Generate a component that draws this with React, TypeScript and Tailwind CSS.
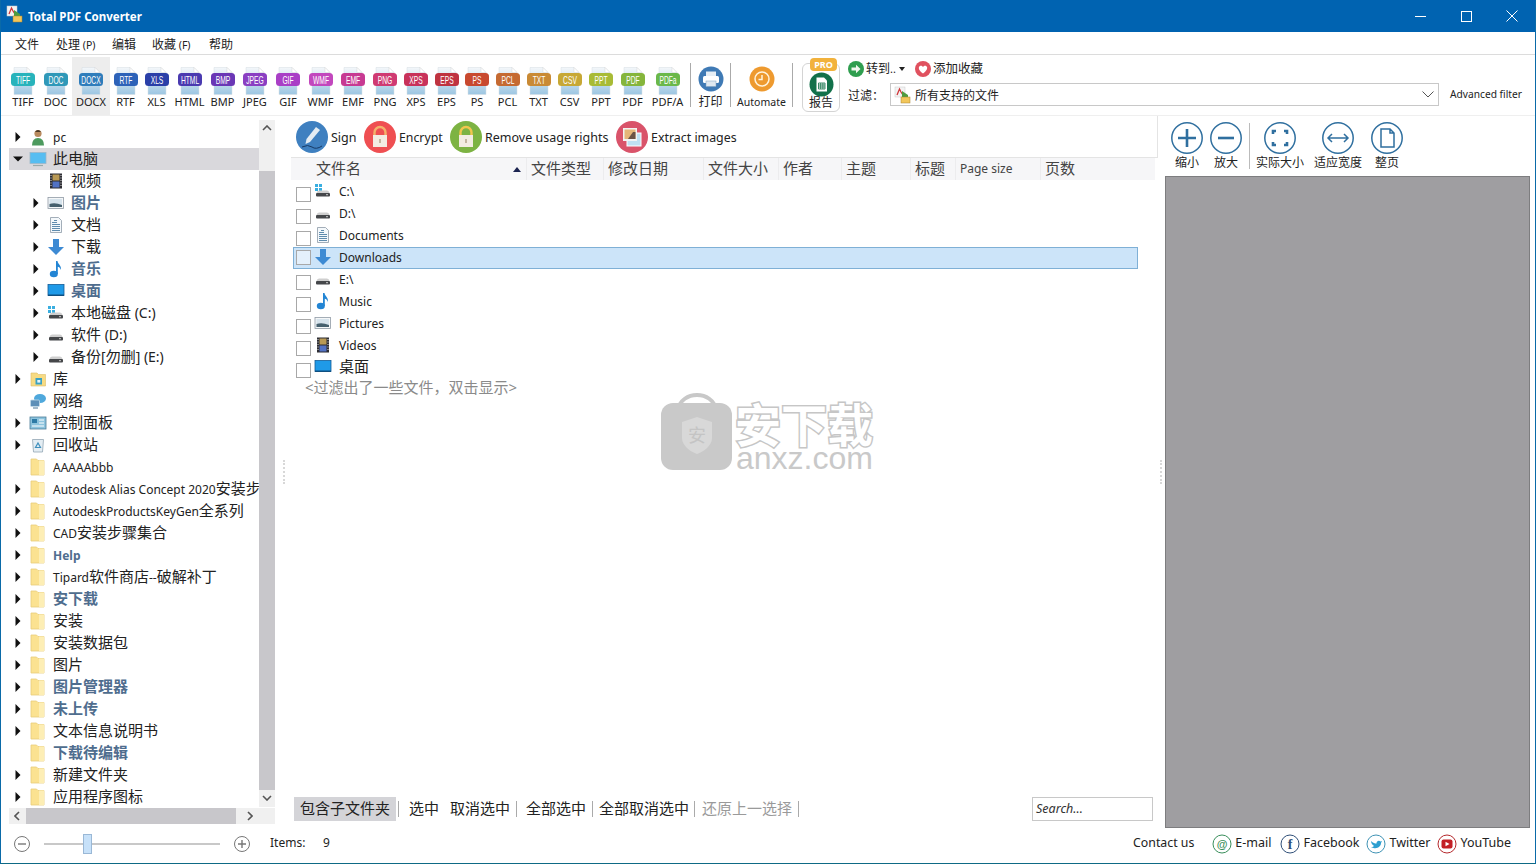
import React from "react";

const SANS = "font-['Noto_Sans','Noto_Sans_CJK_SC',sans-serif]";

function Mixed({ text, cjk = "text-[15px]", latin = "text-[12px]" }: { text: string; cjk?: string; latin?: string }) {
  const parts = text.split(/([\u3000-\u9fff\uff00-\uffef]+)/).filter(Boolean);
  return (
    <>
      {parts.map((p, i) => (
        <span key={i} className={/[\u3000-\u9fff\uff00-\uffef]/.test(p) ? cjk : latin}>
          {p}
        </span>
      ))}
    </>
  );
}

const FORMATS: { n: string; c: string; w: string; active?: boolean }[] = [
  { n: "TIFF", c: "#27b3bb", w: "w-[32px]" },
  { n: "DOC", c: "#2f98b8", w: "w-[33px]" },
  { n: "DOCX", c: "#2f7dbb", w: "w-[38px]", active: true },
  { n: "RTF", c: "#2d62b8", w: "w-[31px]" },
  { n: "XLS", c: "#2a3fa8", w: "w-[31px]" },
  { n: "HTML", c: "#4a3ab0", w: "w-[35px]" },
  { n: "BMP", c: "#6a37b5", w: "w-[31px]" },
  { n: "JPEG", c: "#8a3fc2", w: "w-[34px]" },
  { n: "GIF", c: "#a93fc6", w: "w-[32px]" },
  { n: "WMF", c: "#c247bd", w: "w-[33px]" },
  { n: "EMF", c: "#c73a92", w: "w-[32px]" },
  { n: "PNG", c: "#cf3a72", w: "w-[32px]" },
  { n: "XPS", c: "#c8325a", w: "w-[30px]" },
  { n: "EPS", c: "#bf3340", w: "w-[31px]" },
  { n: "PS", c: "#c8492f", w: "w-[30px]" },
  { n: "PCL", c: "#c56a32", w: "w-[31px]" },
  { n: "TXT", c: "#c98a35", w: "w-[31px]" },
  { n: "CSV", c: "#c7a835", w: "w-[31px]" },
  { n: "PPT", c: "#a8bb35", w: "w-[32px]" },
  { n: "PDF", c: "#85b53c", w: "w-[31px]" },
  { n: "PDF/A", c: "#6ab84a", w: "w-[39px]" },
];

function FileIcon({ n, c }: { n: string; c: string }) {
  const id = "pg" + n.replace("/", "");
  return (
    <svg width="26" height="28" viewBox="0 0 26 28">
      <defs>
        <linearGradient id={id} x1="0" y1="0" x2="0" y2="1">
          <stop offset="0" stopColor="#f4f7fa" />
          <stop offset="1" stopColor="#9cc6e2" />
        </linearGradient>
      </defs>
      <path d="M4 0.5H17L22 5.5V27.5H4Z" fill={`url(#${id})`} stroke="#d5dde3" strokeWidth="0.5" />
      <path d="M17 0.5V5.5H22Z" fill="#fff" stroke="#ccc" strokeWidth="0.4" />
      <rect x="1" y="6" width="24" height="13" rx="3.5" fill={c} />
      <text transform="translate(13 16.6) scale(0.78 1.25)" textAnchor="middle" fontSize="8.6" fill="#fff" fontFamily="Liberation Sans">
        {n === "PDF/A" ? "PDFa" : n}
      </text>
    </svg>
  );
}

function Arrow({ open }: { open?: boolean }) {
  return open ? (
    <svg width="10" height="10" viewBox="0 0 10 10"><path d="M0 2.5H10L5 7.5Z" fill="#111" /></svg>
  ) : (
    <svg width="10" height="10" viewBox="0 0 10 10"><path d="M2.5 0V10L7.5 5Z" fill="#111" /></svg>
  );
}

function Folder() {
  return (
    <svg width="16" height="18" viewBox="0 0 16 18">
      <path d="M1 1H6.5L8 2.5H14V17H1Z" fill="#fbe291" stroke="#e9cd7c" strokeWidth="0.8" />
      <path d="M9 2.5H14V17H9Z" fill="#fdeeb5" />
    </svg>
  );
}

function Drive({ win }: { win?: boolean }) {
  return (
    <svg width="18" height="16" viewBox="0 0 18 16">
      {win && <path d="M1 1h3v3H1zM5 1h3v3H5zM1 5h3v3H1zM5 5h3v3H5z" fill="#39aee0" />}
      <path d="M2.5 10Q3 7.5 5 7.5H13Q15 7.5 15.5 10Z" fill="#cfcfcf" />
      <rect x="2" y="10" width="14" height="3.5" rx="1" fill="#45474a" />
      <rect x="12" y="11.2" width="2" height="1" fill="#ccc" />
    </svg>
  );
}

function Monitor({ small }: { small?: boolean }) {
  return (
    <svg width="18" height="16" viewBox="0 0 18 16">
      <rect x="1" y="1.5" width="16" height="11" fill={small ? "#1f9ae8" : "#56bdf1"} stroke={small ? "#155c96" : "#9cb7c9"} strokeWidth="0.8" />
      {!small && <path d="M4 14.5H14" stroke="#9aa" strokeWidth="1.2" />}
      {small && <rect x="1" y="11.5" width="16" height="1.5" fill="#0f4f80" />}
    </svg>
  );
}

function Film() {
  return (
    <svg width="16" height="16" viewBox="0 0 16 16">
      <rect x="2" y="0.5" width="12" height="15" fill="#2d2d33" />
      <rect x="4.5" y="1.5" width="7" height="6" fill="#b99a55" />
      <rect x="4.5" y="8.5" width="7" height="6" fill="#5272c4" />
      <path d="M3 2v12M13 2v12" stroke="#ddd" strokeWidth="1" strokeDasharray="1 1.5" />
    </svg>
  );
}

function Pic() {
  return (
    <svg width="18" height="14" viewBox="0 0 18 14">
      <rect x="1" y="1.5" width="15.5" height="11" fill="#f5f7f8" stroke="#8f9aa5" strokeWidth="0.8" />
      <rect x="2.5" y="3" width="12.5" height="8" fill="#d6e3ec" />
      <path d="M2.5 8Q8 6 15 9V11H2.5Z" fill="#46606e" />
    </svg>
  );
}

function Doc() {
  return (
    <svg width="14" height="16" viewBox="0 0 14 16">
      <path d="M1.5.5H9.5L12.5 3.5V15.5H1.5Z" fill="#f4f8fb" stroke="#8d9aa7" strokeWidth="0.8" />
      <path d="M5 3.5H8M3 5.5H8M3 7.5H11M3 9.5H11M3 11.5H11M3 13.5H11" stroke="#4e7fa5" strokeWidth="0.9" />
    </svg>
  );
}

function Down() {
  return (
    <svg width="18" height="18" viewBox="0 0 18 18">
      <path d="M6 1H12V9H17L9 17L1 9H6Z" fill="#3d8ad3" />
    </svg>
  );
}

function Note() {
  return (
    <svg width="14" height="18" viewBox="0 0 14 18">
      <ellipse cx="4.8" cy="14" rx="4" ry="3.2" fill="#2385d4" />
      <path d="M7 14V1H8.5C9 4.5 12.5 5 12 10C11 7.5 10 7 8.8 6.8V14Z" fill="#2385d4" />
    </svg>
  );
}

function Person() {
  return (
    <svg width="14" height="17" viewBox="0 0 14 17">
      <circle cx="7" cy="4.5" r="3.6" fill="#b98a5e" />
      <path d="M4 3Q7 -1 10 3Z" fill="#4a3a2a" />
      <path d="M1 16.5Q1 9 7 9Q13 9 13 16.5Z" fill="#4d9a5e" />
    </svg>
  );
}

function Library() {
  return (
    <svg width="17" height="16" viewBox="0 0 17 16">
      <path d="M1 2H7L8.5 3.5H15.5V15H1Z" fill="#f7db83" stroke="#dcbd6a" strokeWidth="0.6" />
      <rect x="5.5" y="7" width="6.5" height="6.5" fill="#3aa1c4" />
      <rect x="7.3" y="9" width="3" height="2.6" fill="#e7f5fa" />
    </svg>
  );
}

function Net() {
  return (
    <svg width="18" height="16" viewBox="0 0 18 16">
      <ellipse cx="11" cy="5.5" rx="6" ry="4.5" fill="#4fa8dc" />
      <rect x="1.5" y="7" width="9" height="6.5" rx="1" fill="#5d8fb8" stroke="#c2d9e8" strokeWidth="0.8" />
      <path d="M4 15H9" stroke="#6a8ea8" strokeWidth="1.2" />
    </svg>
  );
}

function Control() {
  return (
    <svg width="18" height="14" viewBox="0 0 18 14">
      <rect x="1" y="1" width="16" height="12" fill="#8dc4de" stroke="#4c7d98" strokeWidth="0.8" />
      <rect x="3" y="3" width="5" height="4" fill="#2d7aa5" />
      <path d="M10 4H15M10 7H15M3 10H15" stroke="#fff" strokeWidth="1" />
    </svg>
  );
}

function Bin() {
  return (
    <svg width="16" height="16" viewBox="0 0 16 16">
      <path d="M2.5 2.5H13.5L12.5 15H3.5Z" fill="#e4edf3" stroke="#93a6b4" strokeWidth="0.8" />
      <path d="M8 6L10.5 10.5H5.5Z" fill="none" stroke="#3e8fbd" strokeWidth="1.2" />
    </svg>
  );
}

type TreeRow = { t: string; lvl?: 0 | 1; arrow?: boolean | "open"; b?: boolean; i: React.ReactNode; sel?: boolean };

const TREE: TreeRow[] = [
  { t: "pc", arrow: true, i: <Person /> },
  { t: "此电脑", arrow: "open", i: <Monitor />, sel: true },
  { t: "视频", lvl: 1, i: <Film /> },
  { t: "图片", lvl: 1, arrow: true, b: true, i: <Pic /> },
  { t: "文档", lvl: 1, arrow: true, i: <Doc /> },
  { t: "下载", lvl: 1, arrow: true, i: <Down /> },
  { t: "音乐", lvl: 1, arrow: true, b: true, i: <Note /> },
  { t: "桌面", lvl: 1, arrow: true, b: true, i: <Monitor small /> },
  { t: "本地磁盘 (C:)", lvl: 1, arrow: true, i: <Drive win /> },
  { t: "软件 (D:)", lvl: 1, arrow: true, i: <Drive /> },
  { t: "备份[勿删] (E:)", lvl: 1, arrow: true, i: <Drive /> },
  { t: "库", arrow: true, i: <Library /> },
  { t: "网络", i: <Net /> },
  { t: "控制面板", arrow: true, i: <Control /> },
  { t: "回收站", arrow: true, i: <Bin /> },
  { t: "AAAAAbbb", i: <Folder /> },
  { t: "Autodesk Alias Concept 2020安装步骤", arrow: true, i: <Folder /> },
  { t: "AutodeskProductsKeyGen全系列", arrow: true, i: <Folder /> },
  { t: "CAD安装步骤集合", arrow: true, i: <Folder /> },
  { t: "Help", arrow: true, b: true, i: <Folder /> },
  { t: "Tipard软件商店--破解补丁", arrow: true, i: <Folder /> },
  { t: "安下载", arrow: true, b: true, i: <Folder /> },
  { t: "安装", arrow: true, i: <Folder /> },
  { t: "安装数据包", arrow: true, i: <Folder /> },
  { t: "图片", arrow: true, i: <Folder /> },
  { t: "图片管理器", arrow: true, b: true, i: <Folder /> },
  { t: "未上传", arrow: true, b: true, i: <Folder /> },
  { t: "文本信息说明书", arrow: true, i: <Folder /> },
  { t: "下载待编辑", b: true, i: <Folder /> },
  { t: "新建文件夹", arrow: true, i: <Folder /> },
  { t: "应用程序图标", arrow: true, i: <Folder /> },
];

const FILES: { t: string; i: React.ReactNode; sel?: boolean }[] = [
  { t: "C:\\", i: <Drive win /> },
  { t: "D:\\", i: <Drive /> },
  { t: "Documents", i: <Doc /> },
  { t: "Downloads", i: <Down />, sel: true },
  { t: "E:\\", i: <Drive /> },
  { t: "Music", i: <Note /> },
  { t: "Pictures", i: <Pic /> },
  { t: "Videos", i: <Film /> },
  { t: "桌面", i: <Monitor small /> },
];

const COLS: { t: string; w: string; small?: boolean }[] = [
  { t: "文件类型", w: "w-[77px]" },
  { t: "修改日期", w: "w-[100px]" },
  { t: "文件大小", w: "w-[75px]" },
  { t: "作者", w: "w-[63px]" },
  { t: "主题", w: "w-[69px]" },
  { t: "标题", w: "w-[45px]" },
  { t: "Page size", w: "w-[85px]", small: true },
  { t: "页数", w: "w-[60px]" },
];

function Lock({ bg, shackle }: { bg: string; shackle: string }) {
  return (
    <svg width="32" height="32" viewBox="0 0 32 32">
      <circle cx="16" cy="16" r="16" fill={bg} />
      <path d="M10.5 15V11.5a5.5 5.5 0 0 1 11 0V15" fill="none" stroke={shackle} strokeWidth="2.4" />
      <rect x="9" y="14" width="14" height="12" fill="#f3ece2" />
      <rect x="15.2" y="18" width="1.6" height="4" fill="#b8a890" />
    </svg>
  );
}

function ViewBtn({ label, children, w }: { label: string; children: React.ReactNode; w: string }) {
  return (
    <div className={`flex flex-col items-center ${w}`}>
      <svg width="32" height="32" viewBox="0 0 32 32" fill="none" stroke="#2f6f9f">
        <circle cx="16" cy="16" r="15.2" strokeWidth="1.5" />
        {children}
      </svg>
      <span className="mt-px text-[12px] leading-[16px] text-[#222] whitespace-nowrap">{label}</span>
    </div>
  );
}

function Sep() {
  return <div className="w-px h-[16px] bg-[#aaa]" />;
}

function Social({ c, label, children, className }: { c: string; label: string; children: React.ReactNode; className: string }) {
  return (
    <div className={`flex items-center gap-[3px] ${className}`}>
      <svg width="20" height="20" viewBox="0 0 20 20">
        <circle cx="10" cy="10" r="9" fill="none" stroke={c} strokeWidth="1" />
        {children}
      </svg>
      <span className="text-[12.5px] text-[#222]">{label}</span>
    </div>
  );
}

function AppIcon() {
  return (
    <svg width="18" height="18" viewBox="0 0 18 18">
      <rect x="1" y="1" width="10" height="10" fill="#f3f3f3" stroke="#c9c9c9" strokeWidth="0.5" />
      <path d="M3 9L5.5 3L7 6L9 9" fill="none" stroke="#d0363a" strokeWidth="1.3" />
      <path d="M8 5L14 9V12H8Z" fill="#4f9b3f" />
      <rect x="7" y="11" width="9" height="6" fill="#f2c65a" stroke="#a88232" strokeWidth="0.5" />
    </svg>
  );
}

export default function App() {
  return (
    <div className={`relative w-[1536px] h-[864px] flex flex-col bg-white overflow-hidden border-x border-b border-x-[#0a6aa8] border-b-[#0e6a85] ${SANS} text-[#222]`}>
      {/* Title bar */}
      <div className="h-[32px] -mx-px flex items-center bg-[#0063b1] text-white shrink-0">
        <div className="ml-[6px] mb-[4px]"><AppIcon /></div>
        <span className="ml-[4px] mt-[2px] text-[11.5px] font-bold">Total PDF Converter</span>
        <div className="ml-auto flex items-center">
          <div className="w-[46px] flex justify-center"><svg width="11" height="11" viewBox="0 0 11 11"><path d="M0 5.5H11" stroke="#fff" /></svg></div>
          <div className="w-[46px] flex justify-center"><svg width="11" height="11" viewBox="0 0 11 11"><rect x="0.5" y="0.5" width="10" height="10" fill="none" stroke="#fff" /></svg></div>
          <div className="w-[46px] mr-[1px] flex justify-center"><svg width="12" height="12" viewBox="0 0 12 12"><path d="M0.5 0.5L11.5 11.5M11.5 0.5L0.5 11.5" stroke="#fff" /></svg></div>
        </div>
      </div>

      {/* Menu */}
      <div className="h-[23px] flex items-center pl-[14px] border-b border-[#dcdcdc] shrink-0 text-[#222]">
        <span className="w-[41px]"><Mixed text="文件" cjk="text-[12px]" /></span>
        <span className="w-[56px]"><Mixed text="处理" cjk="text-[12px]" /><Mixed text=" (P)" latin="text-[10.5px]" /></span>
        <span className="w-[40px]"><Mixed text="编辑" cjk="text-[12px]" /></span>
        <span className="w-[57px]"><Mixed text="收藏" cjk="text-[12px]" /><Mixed text=" (F)" latin="text-[10.5px]" /></span>
        <span><Mixed text="帮助" cjk="text-[12px]" /></span>
      </div>

      {/* Toolbar */}
      <div className="h-[61px] flex items-stretch pl-[6px] border-b border-[#efefef] shrink-0">
        <div className="flex items-stretch pt-[2px]">
          {FORMATS.map((f) => (
            <div key={f.n} className={`${f.w} flex flex-col items-center pt-[10px] ${f.active ? "bg-[#ededed]" : ""}`}>
              <FileIcon n={f.n} c={f.c} />
              <span className="text-[11px] leading-[14px] text-[#222]">{f.n}</span>
            </div>
          ))}
        </div>
        <div className="w-px my-[8px] ml-[3px] bg-[#aaa]" />
        <div className="w-[39px] flex flex-col items-center pt-[11px]">
          <svg width="26" height="26" viewBox="0 0 26 26">
            <circle cx="13" cy="13" r="12.5" fill="#3f7ab5" />
            <rect x="8" y="5.5" width="10" height="5" fill="#e6eef5" />
            <rect x="5" y="10" width="16" height="7" rx="1.5" fill="#fff" />
            <rect x="8" y="15" width="10" height="5.5" fill="#dfe8f0" stroke="#7da0c0" strokeWidth="0.5" />
          </svg>
          <span className="text-[12px] leading-[16px] mt-[2px]">打印</span>
        </div>
        <div className="w-px my-[8px] bg-[#aaa]" />
        <div className="w-[61px] flex flex-col items-center pt-[11px]">
          <svg width="26" height="26" viewBox="0 0 26 26">
            <circle cx="13" cy="13" r="12.5" fill="#ee9a2f" />
            <circle cx="13" cy="13" r="7" fill="none" stroke="#fff3dc" strokeWidth="1.5" />
            <path d="M13 9V13.5H9.5" fill="none" stroke="#fff3dc" strokeWidth="1.5" />
          </svg>
          <span className="text-[10.5px] leading-[16px] mt-[2px]">Automate</span>
        </div>
        <div className="w-px my-[8px] bg-[#aaa]" />
        <div className="relative ml-[9px] mt-[8px] mb-[3px] w-[38px] rounded-[6px] border border-[#d4d4d4] flex flex-col items-center pt-[8px]">
          <span className="absolute -top-[6px] left-[7px] w-[27px] h-[13px] rounded-[4px] bg-[#f2b23c] text-white text-[9px] font-bold leading-[13px] text-center">PRO</span>
          <svg width="25" height="25" viewBox="0 0 25 25">
            <circle cx="12.5" cy="12.5" r="12" fill="#12714a" />
            <path d="M7.5 5.5H15L18 8.5V19.5H7.5Z" fill="#fff" />
            <path d="M9.5 11H16V17H9.5ZM9.5 13H16M9.5 15H16M11.7 11V17M13.9 11V17" fill="none" stroke="#12714a" strokeWidth="0.8" />
          </svg>
          <span className="text-[12px] leading-[15px] -mt-[2px]">报告</span>
        </div>
        <div className="ml-[8px] flex flex-col flex-1 pr-[13px]">
          <div className="h-[26px] flex items-center pt-[2px]">
            <svg width="16" height="16" viewBox="0 0 16 16"><circle cx="8" cy="8" r="8" fill="#2f9e4f" /><path d="M3.5 6.5H8V3.8L12.5 8L8 12.2V9.5H3.5Z" fill="#f2f7ef" /></svg>
            <span className="ml-[2px] text-[12px]">转到</span>
            <span className="text-[11px]">..</span>
            <svg className="ml-[3px]" width="6" height="4" viewBox="0 0 6 4"><path d="M0 0H6L3 4Z" fill="#222" /></svg>
            <svg className="ml-[10px]" width="16" height="16" viewBox="0 0 16 16"><circle cx="8" cy="8" r="8" fill="#e0515f" /><path d="M8 12.5C4 9.5 3.5 7.5 4 6C5 4 7 4.5 8 6C9 4.5 11 4 12 6C12.5 7.5 12 9.5 8 12.5Z" fill="#fff" /></svg>
            <span className="ml-[2px] text-[12.5px]">添加收藏</span>
          </div>
          <div className="h-[23px] mt-[2px] flex items-center">
            <span className="w-[42px] text-[12px] translate-y-px">过滤：</span>
            <div className="flex-1 h-[23px] border border-[#c8c8c8] flex items-center pl-[3px] pr-[4px]">
              <AppIcon />
              <span className="ml-[3px] text-[12px] translate-y-px">所有支持的文件</span>
              <svg className="ml-auto" width="12" height="7" viewBox="0 0 12 7"><path d="M0.5 0.5L6 6L11.5 0.5" fill="none" stroke="#555" /></svg>
            </div>
            <span className="ml-[11px] text-[10.2px] whitespace-nowrap">Advanced filter</span>
          </div>
        </div>
      </div>

      {/* Main */}
      <div className="flex-1 flex items-stretch min-h-0">
        {/* Left */}
        <div className="w-[282px] shrink-0 pl-[8px] pr-[8px] pt-[4px] pb-[4px] flex flex-col">
          <div className="flex-1 flex min-h-0">
            <div className="w-[250px] pt-[6px] overflow-hidden">
              {TREE.map((r, i) => (
                <div key={i} className={`h-[22px] flex items-center whitespace-nowrap ${r.lvl ? "pl-[18px]" : ""} ${r.sel ? "bg-[#d9d8dc]" : ""} ${r.b ? "font-bold text-[#4f6d8e]" : "text-[#222]"}`}>
                  <span className="w-[18px] flex justify-center shrink-0">
                    {r.arrow && <Arrow open={r.arrow === "open"} />}
                  </span>
                  <span className="w-[20px] ml-px flex justify-center shrink-0">{r.i}</span>
                  <span className="ml-[5px] -translate-y-px">
                    <Mixed text={r.t} latin={r.t.includes(":)") ? "text-[14px]" : "text-[12px]"} />
                  </span>
                </div>
              ))}
            </div>
            <div className="w-[16px] bg-[#f0f0f0] flex flex-col items-center">
              <svg className="mt-[5px]" width="10" height="6" viewBox="0 0 10 6"><path d="M1 5L5 1L9 5" fill="none" stroke="#555" strokeWidth="1.6" /></svg>
              <div className="mt-[40px] w-full h-[619px] bg-[#c8c7cb]" />
              <svg className="mt-[5px]" width="10" height="6" viewBox="0 0 10 6"><path d="M1 1L5 5L9 1" fill="none" stroke="#555" strokeWidth="1.6" /></svg>
            </div>
          </div>
          <div className="h-[16px] mt-px bg-[#f0f0f0] flex items-center shrink-0">
            <svg className="ml-[5px]" width="6" height="10" viewBox="0 0 6 10"><path d="M5 1L1 5L5 9" fill="none" stroke="#555" strokeWidth="1.6" /></svg>
            <div className="ml-[6px] w-[210px] h-full bg-[#c8c7cb]" />
            <svg className="ml-[11px]" width="6" height="10" viewBox="0 0 6 10"><path d="M1 1L5 5L1 9" fill="none" stroke="#555" strokeWidth="1.6" /></svg>
          </div>
        </div>

        <div className="w-[8px] shrink-0 flex items-center"><div className="h-[24px] border-l-2 border-dotted border-[#d8d8d8]" /></div>

        {/* Center */}
        <div className="w-[867px] shrink-0 flex flex-col">
          <div className="h-[42px] pt-[1px] flex items-center pl-[5px] pr-[3px] border-b border-r border-[#e4e4e4] shrink-0">
            <svg width="32" height="32" viewBox="0 0 32 32">
              <circle cx="16" cy="16" r="16" fill="#3f80c0" />
              <path d="M20 6L24 9L14 21L9.5 23L10.5 18Z" fill="#e4ecf3" />
              <path d="M6 26Q12 23 16 26T26 25" fill="none" stroke="#173a66" strokeWidth="1" />
            </svg>
            <span className="ml-[3px] mt-[3px] w-[33px] text-[12.5px]">Sign</span>
            <Lock bg="#ef4f52" shackle="#f4b26b" />
            <span className="ml-[3px] mt-[3px] w-[51px] text-[12.3px]">Encrypt</span>
            <Lock bg="#7db343" shackle="#f2c64e" />
            <span className="ml-[3px] mt-[3px] w-[131px] text-[12.5px] whitespace-nowrap">Remove usage rights</span>
            <svg width="32" height="32" viewBox="0 0 32 32">
              <circle cx="16" cy="16" r="16" fill="#d9536a" />
              <rect x="11" y="12" width="14" height="13" fill="#bfe0f2" stroke="#fff" strokeWidth="1" />
              <rect x="7" y="7" width="14" height="13" fill="#f3f3f3" />
              <rect x="8.5" y="8.5" width="11" height="9.5" fill="#e5b678" />
              <path d="M12 18L17 11H19.5V18Z" fill="#6a5346" />
            </svg>
            <span className="ml-[3px] mt-[3px] text-[12.4px] whitespace-nowrap">Extract images</span>
          </div>

          <div className="h-[22px] w-[864px] flex items-center bg-[#f6f6f8] shrink-0 text-[#444]">
            <span className="w-[235px] pl-[25px] flex items-center -translate-y-px">
              <span className="text-[15px]">文件名</span>
              <svg className="ml-auto mr-[5px] translate-y-px" width="8" height="5" viewBox="0 0 8 5"><path d="M0 5H8L4 0Z" fill="#1b2350" /></svg>
            </span>
            {COLS.map((c) => (
              <span key={c.t} className={`${c.w} h-full flex items-center pl-[4px] border-l border-[#ececee] ${c.small ? "text-[12px]" : "text-[15px] pb-[2px]"}`}>{c.t}</span>
            ))}
          </div>

          <div className="pt-px pl-[2px] w-[847px] flex-1">
            {FILES.map((f) => (
              <div key={f.t} className={`h-[22px] flex items-center ${f.sel ? "border border-[#7fb0d6] bg-[#cce4f9]" : "border border-transparent"}`}>
                <span className={`ml-[2px] mt-[4px] w-[15px] h-[15px] border border-[#a8a8a8] shrink-0 ${f.sel ? "bg-[#e4f0fb] -translate-y-[3px]" : "bg-white"}`} />
                <span className="w-[24px] flex justify-center shrink-0 -translate-y-[1px]">{f.i}</span>
                <span className="ml-[4px] -translate-y-[2px] text-[#222]">
                  <Mixed text={f.t} cjk="text-[15px]" latin="text-[12px]" />
                </span>
              </div>
            ))}
            <div className="h-[20px] flex items-center pl-[12px] -translate-y-[2px] text-[#8a8a8a] text-[15px]">&lt;过滤出了一些文件，双击显示&gt;</div>
          </div>

          <div className="h-[24px] mb-[7px] flex items-center pl-[3px] pr-[5px] text-[15px] shrink-0">
            <span className="w-[102px] h-full flex items-center justify-center bg-[#d4d4d8] pb-[2px]">包含子文件夹</span>
            <span className="ml-[2px]"><Sep /></span>
            <span className="ml-[10px] pb-[2px]">选中</span>
            <span className="ml-[11px] pb-[2px]">取消选中</span>
            <span className="ml-[6px]"><Sep /></span>
            <span className="ml-[9px] pb-[2px]">全部选中</span>
            <span className="ml-[6px]"><Sep /></span>
            <span className="ml-[6px] pb-[2px]">全部取消选中</span>
            <span className="ml-[5px]"><Sep /></span>
            <span className="ml-[7px] pb-[2px] text-[#9a9a9a]">还原上一选择</span>
            <span className="ml-[6px]"><Sep /></span>
            <div className="ml-auto w-[121px] h-[24px] border border-[#c8c8c8] flex items-center pl-[3px] italic text-[12.5px] text-[#333]">Search...</div>
          </div>
        </div>

        <div className="w-[7px] shrink-0 flex items-center"><div className="ml-[2px] h-[24px] border-l-2 border-dotted border-[#d8d8d8]" /></div>

        {/* Right */}
        <div className="w-[365px] shrink-0 flex flex-col">
          <div className="h-[60px] flex items-start pt-[6px] pl-[2px] shrink-0">
            <ViewBtn label="缩小" w="w-[40px]"><path d="M16 7V25M7 16H25" strokeWidth="2.6" /></ViewBtn>
            <ViewBtn label="放大" w="w-[38px]"><path d="M8 16H24" strokeWidth="2.6" /></ViewBtn>
            <div className="ml-[4px] mt-[1px] w-px h-[46px] bg-[#bbb]" />
            <ViewBtn label="实际大小" w="w-[60px]"><path d="M9 12V9H12M20 9H23V12M23 20V23H20M12 23H9V20" strokeWidth="2.6" /></ViewBtn>
            <ViewBtn label="适应宽度" w="w-[56px]"><path d="M6 16H26M10 12L6 16L10 20M22 12L26 16L22 20" strokeWidth="1.5" /></ViewBtn>
            <ViewBtn label="整页" w="w-[42px]"><path d="M10 7H19L23 11V25H10ZM19 7V11H23" strokeWidth="1.5" /></ViewBtn>
          </div>
          <div className="flex-1 bg-[#9f9ea1] border border-[#7d7d7f]" />
        </div>
      </div>

      {/* Status */}
      <div className="h-[35px] pb-[4px] flex items-center shrink-0 pl-[11px]">
        <svg width="20" height="20" viewBox="0 0 20 20"><circle cx="10" cy="10" r="7.5" fill="none" stroke="#777" /><path d="M6 10H14" stroke="#777" strokeWidth="1.4" /></svg>
        <div className="ml-[12px] relative w-[176px] h-[2px] bg-[#c8c8c8]">
          <div className="absolute left-[39px] -top-[9px] w-[9px] h-[20px] bg-[#c7e1f9] border border-[#9ab8d6]" />
        </div>
        <svg className="ml-[12px]" width="20" height="20" viewBox="0 0 20 20"><circle cx="10" cy="10" r="7.5" fill="none" stroke="#777" /><path d="M6 10H14M10 6V14" stroke="#777" strokeWidth="1.4" /></svg>
        <span className="ml-[18px] w-[53px] text-[12px] -translate-y-px">Items:</span>
        <span className="text-[12px] -translate-y-px">9</span>
        <span className="ml-auto text-[12.3px]">Contact us</span>
        <Social c="#3a8f5c" label="E-mail" className="ml-[18px]">
          <text x="10" y="14" textAnchor="middle" fontSize="11" fontWeight="700" fill="#3a8f5c" fontFamily="Liberation Sans">@</text>
        </Social>
        <Social c="#2f4f78" label="Facebook" className="ml-[9px]">
          <text x="10" y="15" textAnchor="middle" fontSize="14" fontWeight="700" fill="#2f4f78" fontFamily="Liberation Serif">f</text>
        </Social>
        <Social c="#3f93b5" label="Twitter" className="ml-[7px]">
          <path d="M5 7C7 9 9 9.5 10.5 9.5C10.5 7 13 6 14.5 7.5L16 7L15 9C15 12 12 15 7.5 14C6.5 13.8 5.5 13.2 5 13C7 13 7.5 12.5 8 12C6.5 11 5 9 5 7Z" fill="#2e9fd0" />
        </Social>
        <Social c="#b5282c" label="YouTube" className="ml-[7px] mr-[24px]">
          <rect x="4.5" y="5.5" width="11" height="9" rx="2" fill="#c32026" />
          <path d="M8.5 7.8V12.2L12.5 10Z" fill="#fff" />
        </Social>
      </div>

      {/* Watermark */}
      <div className="absolute left-[660px] top-[390px] w-[214px] h-[82px] pointer-events-none">
        <svg className="absolute left-0 top-0" width="72" height="80" viewBox="0 0 72 80">
          <path d="M17 20C20 0 52 0 55 20" fill="none" stroke="#c8c8c8" strokeWidth="4" />
          <rect x="0" y="13" width="71" height="67" rx="12" fill="#c9c9c9" />
          <path d="M21 32L36 27L51 32V48C51 56 42 62 36 64C30 62 21 56 21 48Z" fill="#d8d8d8" />
          <text x="36" y="52" textAnchor="middle" fontSize="18" fill="#c4c4c4" fontFamily="Noto Sans CJK SC">安</text>
        </svg>
        <span className="absolute left-[74px] top-[13px] h-[42px] text-[46px] leading-[42px] font-bold whitespace-nowrap text-white [-webkit-text-stroke:3px_#c6c6c6] [paint-order:stroke_fill]">安下载</span>
        <span className="absolute left-[75px] top-[55px] text-[32px] leading-[26px] text-[#c9c9c9] whitespace-nowrap font-['Liberation_Sans',sans-serif]">anxz.com</span>
      </div>
    </div>
  );
}
